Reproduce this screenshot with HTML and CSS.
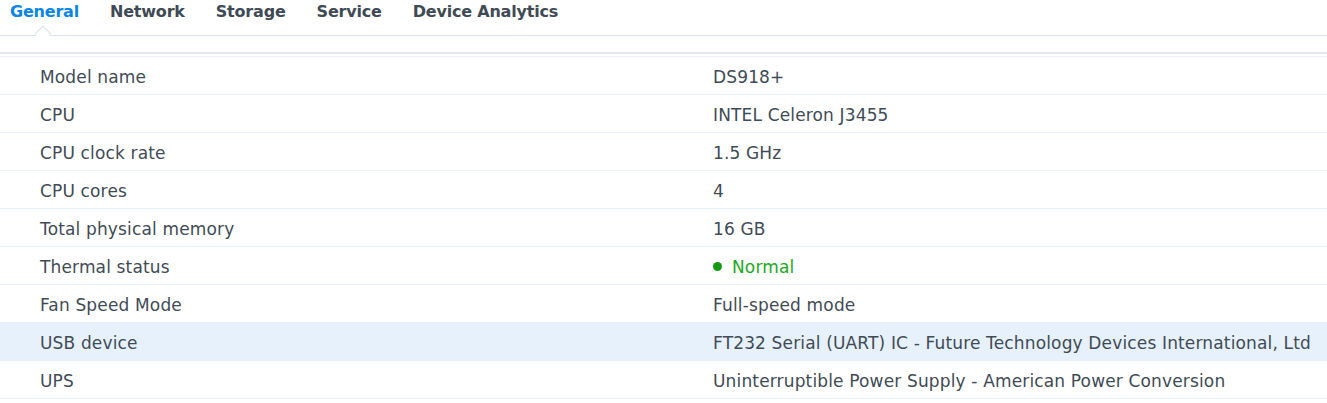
FILE: index.html
```html
<!DOCTYPE html>
<html>
<head>
<meta charset="utf-8">
<link rel="stylesheet" href="styles.css">
</head>
<body>
<div class="tabs">
  <div class="tab active">General<span class="notch"></span></div>
  <div class="tab">Network</div>
  <div class="tab">Storage</div>
  <div class="tab">Service</div>
  <div class="tab">Device Analytics</div>
</div>
<div class="band"></div>
<div class="rows">
  <div class="row"><div class="k">Model name</div><div class="v">DS918+</div></div>
  <div class="row"><div class="k">CPU</div><div class="v">INTEL Celeron J3455</div></div>
  <div class="row"><div class="k">CPU clock rate</div><div class="v">1.5 GHz</div></div>
  <div class="row"><div class="k">CPU cores</div><div class="v">4</div></div>
  <div class="row"><div class="k">Total physical memory</div><div class="v">16 GB</div></div>
  <div class="row"><div class="k">Thermal status</div><div class="v ok"><span class="dot"></span>Normal</div></div>
  <div class="row"><div class="k">Fan Speed Mode</div><div class="v">Full-speed mode</div></div>
  <div class="row sel"><div class="k">USB device</div><div class="v">FT232 Serial (UART) IC - Future Technology Devices International, Ltd</div></div>
  <div class="row"><div class="k">UPS</div><div class="v">Uninterruptible Power Supply - American Power Conversion</div></div>
</div>
</body>
</html>
```
FILE: styles.css
```css
html, body { margin: 0; padding: 0; background: #fff; }
body { font-family: "DejaVu Sans", Verdana, sans-serif; color: #414b55; width: 1327px; height: 403px; overflow: hidden; }
.tabs { display: flex; height: 35px; border-bottom: 1px solid #dbe1e8; padding-left: 10px; }
.tab { position: relative; font-weight: bold; font-size: 16px; color: #404a54; padding-top: 2px; margin-right: 31px; letter-spacing: -0.2px; }
.tab.active { color: #0886e5; }
.notch { position: absolute; left: 27px; top: 28px; width: 11px; height: 11px; background: #fff; border-left: 1px solid #dbe1e8; border-top: 1px solid #dbe1e8; transform: rotate(45deg); }
.band { height: 16px; border-bottom: 2px solid #e1e7ee; }
.rows { margin-top: 2px; border-top: 1px solid #eef2f7; }
.row { display: flex; height: 37px; box-sizing: border-box; padding-top: 2px; align-items: center; border-bottom: 1px solid #e9eff6; font-size: 17px; letter-spacing: 0.15px; }
.row { height: 38px; }
.row.sel { background: #e6f1fc; }
.k { width: 713px; padding-left: 40px; box-sizing: border-box; }
.v { flex: 1; white-space: nowrap; }
.ok { color: #22a722; display: flex; align-items: center; }
.dot { width: 9px; height: 9px; border-radius: 50%; background: #129b12; margin-right: 10px; }
```
